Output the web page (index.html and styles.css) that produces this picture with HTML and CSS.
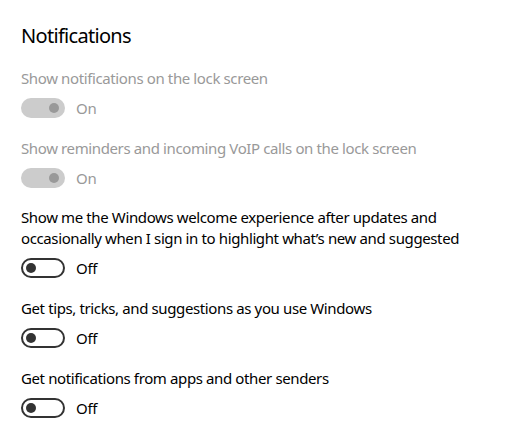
FILE: index.html
```html
<!DOCTYPE html>
<html>
<head>
<meta charset="utf-8">
<link rel="stylesheet" href="styles.css">
</head>
<body>
<main class="page">
  <h1 class="title">Notifications</h1>
  <div class="setting disabled">
    <div class="label">Show notifications on the lock screen</div>
    <div class="toggle-row">
      <span class="toggle on"><span class="knob"></span></span>
      <span class="state">On</span>
    </div>
  </div>
  <div class="setting disabled">
    <div class="label">Show reminders and incoming VoIP calls on the lock screen</div>
    <div class="toggle-row">
      <span class="toggle on"><span class="knob"></span></span>
      <span class="state">On</span>
    </div>
  </div>
  <div class="setting">
    <div class="label multi">Show me the Windows welcome experience after updates and<br>occasionally when I sign in to highlight what’s new and suggested</div>
    <div class="toggle-row">
      <span class="toggle off"><span class="knob"></span></span>
      <span class="state">Off</span>
    </div>
  </div>
  <div class="setting">
    <div class="label">Get tips, tricks, and suggestions as you use Windows</div>
    <div class="toggle-row">
      <span class="toggle off"><span class="knob"></span></span>
      <span class="state">Off</span>
    </div>
  </div>
  <div class="setting">
    <div class="label">Get notifications from apps and other senders</div>
    <div class="toggle-row">
      <span class="toggle off"><span class="knob"></span></span>
      <span class="state">Off</span>
    </div>
  </div>
</main>
</body>
</html>
```
FILE: styles.css
```css
html, body {
  margin: 0;
  padding: 0;
  background: #ffffff;
}
.page {
  padding: 22px 0 0 21px;
  width: 480px;
  font-family: "Noto Sans", "Open Sans", sans-serif;
  color: #000000;
}
.title {
  margin: 0 0 17px 0;
  font-size: 20px;
  line-height: 28px;
  font-weight: 400;
  letter-spacing: -0.7px;
}
.setting {
  margin-bottom: 19px;
}
.label {
  font-size: 15px;
  line-height: 22px;
  letter-spacing: -0.38px;
  white-space: nowrap;
}
.label.multi {
  line-height: 21px;
}
.toggle-row {
  display: flex;
  align-items: center;
  margin-top: 9px;
  height: 20px;
}
.toggle {
  box-sizing: border-box;
  width: 44px;
  height: 20px;
  border-radius: 10px;
  display: flex;
  align-items: center;
}
.toggle .knob {
  width: 10px;
  height: 10px;
  border-radius: 50%;
}
.toggle.on {
  background: #cccccc;
  justify-content: flex-end;
  padding-right: 6px;
}
.toggle.on .knob {
  background: #999999;
}
.toggle.off {
  border: 2px solid #333333;
  padding-left: 3px;
}
.toggle.off .knob {
  background: #333333;
}
.state {
  margin-left: 11px;
  font-size: 15px;
  line-height: 20px;
  letter-spacing: -0.3px;
}
.disabled .label,
.disabled .state {
  color: #999999;
}
```
